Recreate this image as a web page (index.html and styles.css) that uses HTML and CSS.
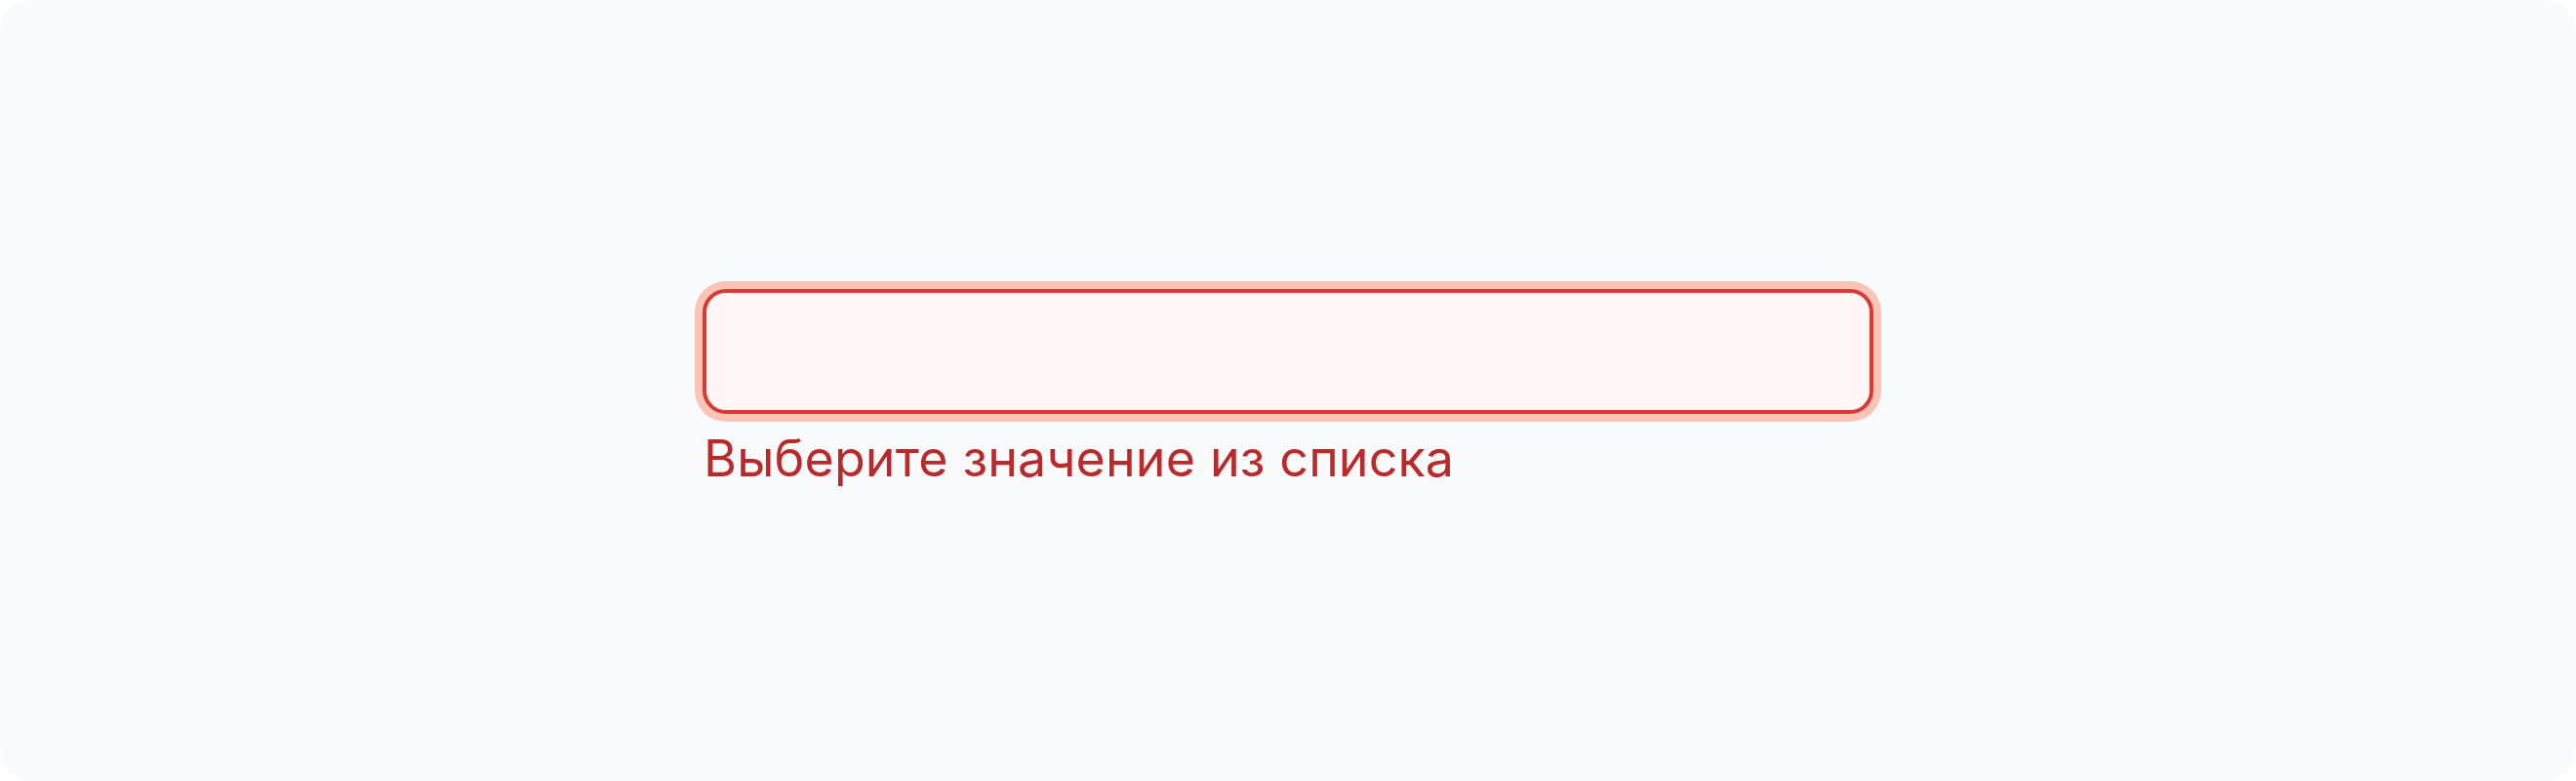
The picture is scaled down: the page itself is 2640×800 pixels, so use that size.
FILE: index.html
```html
<!DOCTYPE html>
<html lang="ru">
  <head>
    <meta charset="UTF-8" />
    <meta name="viewport" content="width=device-width, initial-scale=1.0" />
    <title>Поле с ошибкой</title>
    <link rel="stylesheet" href="styles.css">
  </head>
  <body>
    <div class="card">
      <div class="form-group">
        <input type="text" class="error-input" aria-label="Значение" aria-describedby="errorValue" />
        <span class="error" id="errorValue">Выберите значение из списка</span>
      </div>
    </div>
  </body>
</html>
```

FILE: styles.css
```css
body {
  margin: 0;
  background-color: #fff;
  font-family: Inter, "Liberation Sans", sans-serif;
}

.card {
  display: flex;
  align-items: center;
  justify-content: center;
  height: 800px;
  border-radius: 32px;
  background-color: #f9fafc;
}

.form-group {
  width: 1200px;
}

input {
  display: block;
  width: 100%;
  height: 128px;
  padding: 0 32px;
  box-sizing: border-box;
  border-radius: 24px;
  outline: none;
  font: inherit;
  font-size: 56px;
}

.error-input {
  border: 4px solid #d93a35;
  background-color: #fff6f5;
  box-shadow: 0 0 0 8px #fbc4b4;
}

.error {
  display: block;
  margin-top: 12px;
  padding-left: 1px;
  color: #bb2a2a;
  font-size: 52px;
  line-height: 68px;
  letter-spacing: 0.12px;
}
```
